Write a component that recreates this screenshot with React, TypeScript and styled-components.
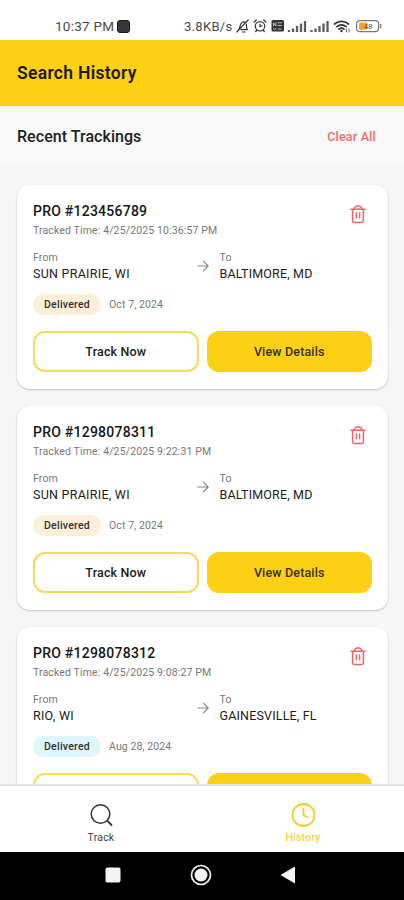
import React from "react";
import styled, { createGlobalStyle } from "styled-components";

const YELLOW = "#fcd015";

const GlobalStyle = createGlobalStyle`
  * { box-sizing: border-box; }
  body { margin: 0; background: #fff; font-family: Roboto, "Liberation Sans", sans-serif; }
  svg { display: block; flex: none; }
`;

const Screen = styled.div`
  display: flex;
  flex-direction: column;
  width: 404px;
  height: 900px;
  overflow: hidden;
  background: #f6f6f6;
`;

const StatusBar = styled.div`
  flex: none;
  display: flex;
  justify-content: space-between;
  align-items: center;
  height: 40px;
  padding: 12px 22px 0 55px;
  background: #fff;
  color: #4a4a4a;
  font-size: 13px;
`;

const StatusGroup = styled.div`
  display: flex;
  align-items: center;
`;

const Clock = styled.span`
  width: 62px;
  font-size: 13.5px;
  letter-spacing: 0.25px;
  white-space: nowrap;
`;

const AppChip = styled.span`
  width: 13px;
  height: 13px;
  border-radius: 3px;
  border: 1.5px solid #181818;
  background: #373737;
`;

const Speed = styled.span`
  width: 51px;
  letter-spacing: 0.3px;
  white-space: nowrap;
`;

const Header = styled.header`
  flex: none;
  display: flex;
  align-items: center;
  height: 66px;
  padding: 0 17px 0;
  background: ${YELLOW};
  border-bottom: 1px solid #f1cd3e;
`;

const HeaderTitle = styled.h1`
  margin: 0;
  font-size: 17.5px;
  line-height: 24px;
  font-weight: 600;
  letter-spacing: 0.3px;
  color: #1d1a08;
`;

const SectionBar = styled.div`
  flex: none;
  display: flex;
  align-items: center;
  justify-content: space-between;
  height: 60px;
  padding: 0 28px 0 17px;
  background: #f8f8f8;
`;

const SectionTitle = styled.h2`
  margin: 0;
  font-size: 16px;
  font-weight: 500;
  letter-spacing: 0.05px;
  color: #1e1e1e;
`;

const ClearAll = styled.button`
  padding: 0;
  border: 0;
  background: none;
  font: 500 12.5px Roboto, sans-serif;
  letter-spacing: 0.2px;
  color: #f4696b;
`;

const List = styled.main`
  flex: 1;
  min-height: 0;
  overflow: hidden;
  display: flex;
  flex-direction: column;
  gap: 17px;
  padding: 19px 16px 0 17px;
`;

const Card = styled.article`
  flex: none;
  height: 204px;
  padding: 16px 16px 17px;
  border-radius: 13px;
  background: #fff;
  box-shadow: 0 1px 2px rgba(0, 0, 0, 0.22);
`;

const CardHead = styled.div`
  display: flex;
  justify-content: space-between;
  height: 38px;
  padding-right: 6px;
`;

const ProNumber = styled.div`
  font-size: 14px;
  line-height: 20px;
  font-weight: 500;
  letter-spacing: 0.24px;
  color: #161616;
`;

const TrackedTime = styled.div`
  font-size: 10.5px;
  line-height: 19px;
  letter-spacing: 0.13px;
  color: #777;
`;

const DeleteButton = styled.button`
  align-self: flex-start;
  margin-top: 3px;
  padding: 0;
  border: 0;
  background: none;
`;

const Route = styled.div`
  display: grid;
  grid-template-columns: 152.5px 12px 1fr;
  column-gap: 11px;
  align-items: center;
  margin-top: 11px;
`;

const PlaceLabel = styled.div`
  font-size: 10.5px;
  line-height: 16px;
  letter-spacing: 0.15px;
  color: #777;
`;

const PlaceName = styled.div<{ $spacing: number }>`
  font-size: 12.5px;
  line-height: 16px;
  letter-spacing: ${(p) => p.$spacing}px;
  white-space: nowrap;
  color: #1c1c1c;
`;

const StatusRow = styled.div`
  display: flex;
  align-items: center;
  gap: 8px;
  margin-top: 12px;
`;

const Badge = styled.span<{ $color: string }>`
  display: flex;
  align-items: center;
  justify-content: center;
  width: 68px;
  height: 21px;
  border-radius: 11px;
  background: ${(p) => p.$color};
  font-size: 10.5px;
  font-weight: 500;
  letter-spacing: 0.25px;
  color: #303030;
`;

const DateText = styled.span`
  font-size: 10.5px;
  letter-spacing: 0.1px;
  color: #777;
`;

const Actions = styled.div`
  display: grid;
  grid-template-columns: 1fr 1fr;
  gap: 8px;
  margin-top: 16px;
`;

const ActionButton = styled.button<{ $filled?: boolean }>`
  height: 41px;
  padding: 0;
  border: 2px solid ${(p) => (p.$filled ? YELLOW : "#f5da5c")};
  border-radius: 12px;
  background: ${(p) => (p.$filled ? YELLOW : "#fff")};
  font: 500 12.5px Roboto, sans-serif;
  letter-spacing: 0.15px;
  color: ${(p) => (p.$filled ? "#3a3108" : "#1c1c1c")};
`;

const TabBar = styled.nav`
  flex: none;
  display: grid;
  grid-template-columns: 1fr 1fr;
  height: 68px;
  border-top: 2px solid #e2e2e2;
  background: #fff;
`;

const Tab = styled.div<{ $active?: boolean }>`
  display: flex;
  flex-direction: column;
  align-items: center;
  padding-top: 17px;
  gap: 4px;
  font-size: 10.5px;
  line-height: 14px;
  font-weight: ${(p) => (p.$active ? 500 : 400)};
  letter-spacing: 0.2px;
  color: ${(p) => (p.$active ? "#f5d33c" : "#3d3d3d")};
`;

const SystemBar = styled.div`
  flex: none;
  display: flex;
  align-items: center;
  height: 48px;
  padding: 0 108px 2px 105px;
  justify-content: space-between;
  background: #000;
`;

const TrashIcon = () => (
  <svg width="16" height="20" viewBox="0 0 16 20" fill="none" stroke="#ee6466" strokeWidth="1.5" strokeLinecap="round" strokeLinejoin="round">
    <path d="M1 5.2h14M3.800 5 5 3.200A2.500 2.500 0 0 1 7 2h2a2.500 2.500 0 0 1 2 1.200L12.200 5M2.600 5.400V16.700a1.700 1.700 0 0 0 1.700 1.700h7.400a1.700 1.700 0 0 0 1.700-1.700V5.400M6.400 9v4.800M9.600 9v4.800" />
  </svg>
);

const ArrowIcon = () => (
  <svg width="12" height="12" viewBox="0 0 12 12" fill="none" stroke="#858585" strokeWidth="1.1" strokeLinecap="round" strokeLinejoin="round">
    <path d="M0.8 6h10.4M6.4 1.2 11.2 6l-4.8 4.8" />
  </svg>
);

const StatusIcons = () => (
  <svg width="147" height="16" viewBox="0 0 147 16" fill="none" stroke="#333" strokeWidth="1.2" strokeLinecap="round">
    <path d="M3.2 12.2c1.9-1.6 1.5-3.2 2.2-5.3C6.300 4.300 8 3.300 10.200 4.100M11.300 6.200c.5 2.500-.2 3.500 1 5.500H6M7.500 14h2.500M13.200 1.800 1.800 14" />
    <circle cx="25" cy="8.300" r="4.700" />
    <path d="M19 4.200 21.300 2M31 4.200 28.700 2M25 6v2.500l2-.8M21.700 12.300l-1 1.200M28.300 12.300l1 1.200" />
    <rect x="36.500" y="2" width="12.500" height="11.500" rx="1.500" fill="#333" stroke="none" />
    <path d="M38.500 8V4.800l2.400 3.200V4.800M43 4.800h3.500M43 7.500h3.500M38.500 11h2.500M43 11h3" stroke="#ddd" strokeWidth=".8" />
    <g strokeWidth="2.300" strokeLinecap="butt" stroke="#5c5c5c">
      <path d="M54 14v-2M58 14v-3.500M62 14V8M66 14V5.500M70 14V3" />
      <path d="M76.500 14v-2M80.500 14v-3.500M84.500 14V8M88.500 14V5.500M92.500 14V3" />
    </g>
    <path d="M99.500 6c4.200-3.500 9.800-3.500 14 0M101.800 8.600c3-2.300 6.400-2.300 9.400 0M104 11c1.600-1.200 3.400-1.200 5 0" strokeWidth="1.700" stroke="#333" />
    <circle cx="106.500" cy="13" r="1.200" fill="#333" stroke="none" />
    <path d="M111.500 11v3M114 11v3" strokeWidth=".7" />
    <rect x="121.600" y="2.600" width="22" height="11" rx="3.200" stroke="#777" />
    <rect x="124" y="4.500" width="8.500" height="7.200" rx="1.500" fill="#f5a126" stroke="none" />
    <path d="M145.700 6.300v3.500" stroke="#777" />
    <text x="128.500" y="11.200" fontSize="8" fontFamily="Roboto, sans-serif" fill="#555" stroke="none">48</text>
  </svg>
);

const SearchIcon = () => (
  <svg width="24" height="24" viewBox="0 0 24 24" fill="none" stroke="#333" strokeLinecap="round">
    <circle cx="11.500" cy="11" r="9.300" strokeWidth="1.500" />
    <path d="m18.200 17.700 4.300 4.300" strokeWidth="1.800" />
  </svg>
);

const ClockIcon = () => (
  <svg width="24" height="24" viewBox="0 0 24 24" fill="none" stroke="#f6cd22" strokeWidth="1.800" strokeLinecap="round" strokeLinejoin="round">
    <circle cx="12.500" cy="12" r="11" />
    <path d="M12.500 5.500V12l4 2.300" />
  </svg>
);

interface Tracking {
  pro: string;
  time: string;
  from: string;
  to: string;
  date: string;
  badge: string;
}

const trackings: Tracking[] = [
  { pro: "123456789", time: "4/25/2025 10:36:57 PM", from: "SUN PRAIRIE, WI", to: "BALTIMORE, MD", date: "Oct 7, 2024", badge: "#feefd9" },
  { pro: "1298078311", time: "4/25/2025 9:22:31 PM", from: "SUN PRAIRIE, WI", to: "BALTIMORE, MD", date: "Oct 7, 2024", badge: "#feefd9" },
  { pro: "1298078312", time: "4/25/2025 9:08:27 PM", from: "RIO, WI", to: "GAINESVILLE, FL", date: "Aug 28, 2024", badge: "#def6fd" },
];

const TrackingCard = ({ item }: { item: Tracking }) => (
  <Card>
    <CardHead>
      <div>
        <ProNumber>PRO #{item.pro}</ProNumber>
        <TrackedTime>Tracked Time: {item.time}</TrackedTime>
      </div>
      <DeleteButton aria-label="Delete"><TrashIcon /></DeleteButton>
    </CardHead>
    <Route>
      <div>
        <PlaceLabel>From</PlaceLabel>
        <PlaceName $spacing={0.26}>{item.from}</PlaceName>
      </div>
      <ArrowIcon />
      <div>
        <PlaceLabel>To</PlaceLabel>
        <PlaceName $spacing={0.17}>{item.to}</PlaceName>
      </div>
    </Route>
    <StatusRow>
      <Badge $color={item.badge}>Delivered</Badge>
      <DateText>{item.date}</DateText>
    </StatusRow>
    <Actions>
      <ActionButton>Track Now</ActionButton>
      <ActionButton $filled>View Details</ActionButton>
    </Actions>
  </Card>
);

export default function App() {
  return (
    <Screen>
      <GlobalStyle />
      <StatusBar>
        <StatusGroup>
          <Clock>10:37 PM</Clock>
          <AppChip />
        </StatusGroup>
        <StatusGroup>
          <Speed>3.8KB/s</Speed>
          <StatusIcons />
        </StatusGroup>
      </StatusBar>
      <Header>
        <HeaderTitle>Search History</HeaderTitle>
      </Header>
      <SectionBar>
        <SectionTitle>Recent Trackings</SectionTitle>
        <ClearAll>Clear All</ClearAll>
      </SectionBar>
      <List>
        {trackings.map((t) => (
          <TrackingCard key={t.pro} item={t} />
        ))}
      </List>
      <TabBar>
        <Tab><SearchIcon />Track</Tab>
        <Tab $active><ClockIcon />History</Tab>
      </TabBar>
      <SystemBar>
        <svg width="16" height="16" viewBox="0 0 16 16"><rect x=".5" y=".5" width="15" height="15" rx="2" fill="#f4f4f4" /></svg>
        <svg width="22" height="22" viewBox="0 0 22 22"><circle cx="11" cy="11" r="9.500" fill="none" stroke="#f4f4f4" strokeWidth="1.700" /><circle cx="11" cy="11" r="6.500" fill="#f4f4f4" /></svg>
        <svg width="16" height="18" viewBox="0 0 16 18"><path d="M15 .5v17L.5 9z" fill="#f4f4f4" /></svg>
      </SystemBar>
    </Screen>
  );
}
